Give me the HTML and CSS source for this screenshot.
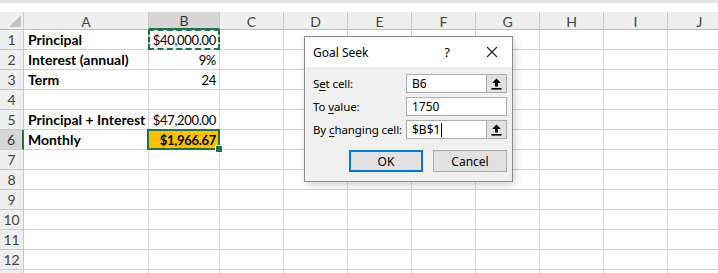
FILE: index.html
```html
<!DOCTYPE html>
<html>
<head>
<meta charset="utf-8">
<link rel="stylesheet" href="styles.css">
</head>
<body>
<div class="app">
  <div class="topband"></div>
  <div class="sheet">
    <div class="corner"><svg class="corner-tri" width="12" height="12" viewBox="0 0 12 12"><polygon points="12,0 12,12 0,12" fill="#c4c4c4"/></svg></div>
    <div class="ch">A</div>
    <div class="ch ch-sel">B</div>
    <div class="ch">C</div>
    <div class="ch">D</div>
    <div class="ch">E</div>
    <div class="ch">F</div>
    <div class="ch">G</div>
    <div class="ch">H</div>
    <div class="ch">I</div>
    <div class="ch">J</div>

    <div class="rh">1</div><div class="c ca">Principal</div><div class="c cb copy">$40,000.00</div><div class="c"></div><div class="c"></div><div class="c"></div><div class="c"></div><div class="c"></div><div class="c"></div><div class="c"></div><div class="c"></div>
    <div class="rh">2</div><div class="c ca">Interest (annual)</div><div class="c cb">9%</div><div class="c"></div><div class="c"></div><div class="c"></div><div class="c"></div><div class="c"></div><div class="c"></div><div class="c"></div><div class="c"></div>
    <div class="rh">3</div><div class="c ca">Term</div><div class="c cb">24</div><div class="c"></div><div class="c"></div><div class="c"></div><div class="c"></div><div class="c"></div><div class="c"></div><div class="c"></div><div class="c"></div>
    <div class="rh">4</div><div class="c ca"></div><div class="c cb"></div><div class="c"></div><div class="c"></div><div class="c"></div><div class="c"></div><div class="c"></div><div class="c"></div><div class="c"></div><div class="c"></div>
    <div class="rh">5</div><div class="c ca">Principal + Interest</div><div class="c cb">$47,200.00</div><div class="c"></div><div class="c"></div><div class="c"></div><div class="c"></div><div class="c"></div><div class="c"></div><div class="c"></div><div class="c"></div>
    <div class="rh rh-sel">6</div><div class="c ca">Monthly</div><div class="c cb active">$1,966.67</div><div class="c"></div><div class="c"></div><div class="c"></div><div class="c"></div><div class="c"></div><div class="c"></div><div class="c"></div><div class="c"></div>
    <div class="rh">7</div><div class="c ca"></div><div class="c cb"></div><div class="c"></div><div class="c"></div><div class="c"></div><div class="c"></div><div class="c"></div><div class="c"></div><div class="c"></div><div class="c"></div>
    <div class="rh">8</div><div class="c ca"></div><div class="c cb"></div><div class="c"></div><div class="c"></div><div class="c"></div><div class="c"></div><div class="c"></div><div class="c"></div><div class="c"></div><div class="c"></div>
    <div class="rh">9</div><div class="c ca"></div><div class="c cb"></div><div class="c"></div><div class="c"></div><div class="c"></div><div class="c"></div><div class="c"></div><div class="c"></div><div class="c"></div><div class="c"></div>
    <div class="rh">10</div><div class="c ca"></div><div class="c cb"></div><div class="c"></div><div class="c"></div><div class="c"></div><div class="c"></div><div class="c"></div><div class="c"></div><div class="c"></div><div class="c"></div>
    <div class="rh">11</div><div class="c ca"></div><div class="c cb"></div><div class="c"></div><div class="c"></div><div class="c"></div><div class="c"></div><div class="c"></div><div class="c"></div><div class="c"></div><div class="c"></div>
    <div class="rh">12</div><div class="c ca"></div><div class="c cb"></div><div class="c"></div><div class="c"></div><div class="c"></div><div class="c"></div><div class="c"></div><div class="c"></div><div class="c"></div><div class="c"></div>
    <div class="rh rh-cut"></div><div class="c ca"></div><div class="c cb"></div><div class="c"></div><div class="c"></div><div class="c"></div><div class="c"></div><div class="c"></div><div class="c"></div><div class="c"></div><div class="c"></div>
  </div>

  <div class="dialog">
    <div class="titlebar">
      <span class="title">Goal Seek</span>
      <span class="help">?</span>
      <svg class="close" width="12" height="12" viewBox="0 0 12 12"><path d="M1 1 L11 11 M11 1 L1 11" stroke="#222" stroke-width="1.1" fill="none"/></svg>
    </div>
    <div class="body">
      <div class="field">
        <span class="label">S<u>e</u>t cell:</span>
        <div class="input-wrap">
          <div class="input">B6</div>
          <div class="pick"><svg width="11" height="12" viewBox="0 0 11 12"><path d="M5.5 0.5 L10 5 L7 5 L7 8.5 L4 8.5 L4 5 L1 5 Z" fill="#000"/><rect x="0.5" y="10" width="10" height="1.6" fill="#000"/></svg></div>
        </div>
      </div>
      <div class="field">
        <span class="label">To <u>v</u>alue:</span>
        <div class="input-wrap">
          <div class="input full">1750</div>
        </div>
      </div>
      <div class="field">
        <span class="label">By <u>c</u>hanging cell:</span>
        <div class="input-wrap">
          <div class="input">$B$1<span class="caret"></span></div>
          <div class="pick"><svg width="11" height="12" viewBox="0 0 11 12"><path d="M5.5 0.5 L10 5 L7 5 L7 8.5 L4 8.5 L4 5 L1 5 Z" fill="#000"/><rect x="0.5" y="10" width="10" height="1.6" fill="#000"/></svg></div>
        </div>
      </div>
      <div class="buttons">
        <div class="btn btn-default">OK</div>
        <div class="btn">Cancel</div>
      </div>
    </div>
  </div>
</div>
</body>
</html>
```

FILE: styles.css
```css
* { box-sizing: border-box; }
html, body { margin: 0; padding: 0; background: #fff; }
.app {
  position: relative;
  width: 718px;
  height: 273px;
  overflow: hidden;
  background: #fff;
}
.topband {
  height: 12px;
  background: #fff;
  border-top: 3px solid #e3e3e3;
}
.sheet {
  display: grid;
  grid-template-columns: 24px 125px 71px repeat(8, 64px);
  grid-template-rows: 18px;
  grid-auto-rows: 20px;
  width: 732px;
  font-family: "Lato", "Open Sans", sans-serif;
  font-size: 13.5px;
  color: #000;
}
.corner, .ch, .rh {
  background: #efefef;
  color: #444;
  border-right: 1px solid #c8c8c8;
  border-bottom: 1px solid #c8c8c8;
  display: flex;
  align-items: center;
  justify-content: center;
  font-size: 14px;
}
.corner {
  position: relative;
  justify-content: flex-end;
  align-items: flex-end;
  padding: 0 2px 2px 0;
  border-bottom: 1px solid #bdbdbd;
}
.ch { border-bottom: 1px solid #bdbdbd; padding-top: 1px; }
.ch-sel {
  background: #d6d6d6;
  color: #333;
  border-bottom: 2px solid #217346;
}
.rh-sel {
  background: #d6d6d6;
  color: #333;
  border-right: 2px solid #217346;
}
.c {
  border-right: 1px solid #d4d4d4;
  border-bottom: 1px solid #d4d4d4;
  display: flex;
  align-items: center;
  white-space: nowrap;
  position: relative;
}
.ca {
  font-weight: 700;
  font-size: 14px;
  padding-left: 4px;
}
.cb {
  justify-content: flex-end;
  padding-right: 3px;
  font-size: 13px;
  letter-spacing: -0.3px;
}
.copy::after {
  content: "";
  position: absolute;
  left: -1px; top: -1px; right: -1px; bottom: -1px;
  border: 2px dashed #217346;
}
.active {
  background: #ffc000;
  font-weight: 700;
}
.active::after {
  content: "";
  position: absolute;
  left: -2px; top: -1px; right: -1px; bottom: -1px;
  border: 2px solid #217346;
}
.active::before {
  content: "";
  position: absolute;
  right: -4px; bottom: -4px;
  width: 6px; height: 6px;
  background: #217346;
  border: 1px solid #fff;
  z-index: 2;
}

.dialog {
  position: absolute;
  left: 304px;
  top: 36px;
  width: 209px;
  height: 146px;
  border: 1px solid #8c8c8c;
  background: #f0f0f0;
  box-shadow: 2px 3px 8px rgba(0,0,0,0.18);
  font-family: "Noto Sans", "Open Sans", sans-serif;
  font-size: 11.5px;
  color: #000;
  display: flex;
  flex-direction: column;
}
.titlebar {
  height: 30px;
  background: #fff;
  display: flex;
  align-items: center;
  padding-left: 8px;
  flex-shrink: 0;
}
.title { flex: 1; font-size: 12px; }
.help { width: 14px; margin-right: 32px; text-align: center; font-size: 13px; }
.close { margin-right: 14px; }
.body {
  padding: 7px 5px 0 8px;
  display: flex;
  flex-direction: column;
  gap: 4px;
}
.field {
  display: flex;
  align-items: center;
  height: 19px;
}
.label { width: 93px; flex-shrink: 0; white-space: nowrap; letter-spacing: -0.1px; }
.label u { text-decoration-thickness: 1px; text-underline-offset: 2px; }
.input-wrap {
  flex: 1;
  display: flex;
  height: 19px;
}
.input {
  flex: 1;
  background: #fff;
  border: 1px solid #adadad;
  padding-left: 5px;
  display: flex;
  align-items: center;
  font-size: 12px;
}
.caret {
  display: inline-block;
  width: 1px;
  height: 14px;
  background: #000;
  margin-left: 1px;
}
.pick {
  width: 20px;
  background: #e1e1e1;
  border: 1px solid #adadad;
  border-left: none;
  display: flex;
  align-items: center;
  justify-content: center;
}
.buttons {
  display: flex;
  justify-content: flex-end;
  gap: 10px;
  margin-top: 7px;
}
.btn {
  width: 74px;
  height: 22px;
  background: #e1e1e1;
  border: 1px solid #adadad;
  display: flex;
  align-items: center;
  justify-content: center;
  font-size: 12px;
}
.btn-default {
  border: 2px solid #0078d7;
}
```
